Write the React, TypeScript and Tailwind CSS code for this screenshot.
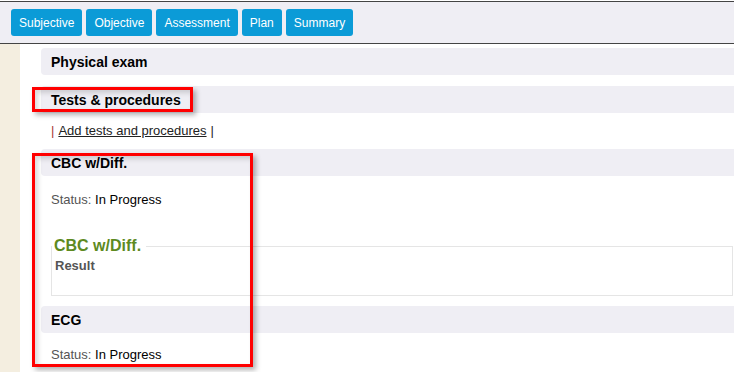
const tabs = ["Subjective", "Objective", "Assessment", "Plan", "Summary"];

function SectionHeader({ title }: { title: string }) {
  return (
    <div className="h-[27px] bg-[#efeef4] rounded-l-[4px] pl-[10px] pt-[2px] flex items-center text-[14px] font-bold text-black">
      {title}
    </div>
  );
}

function StatusLine() {
  return (
    <div className="pl-[10px] text-[13px] leading-[15px]">
      <span className="text-[#555]">Status:</span> <span className="text-black">In Progress</span>
    </div>
  );
}

export default function App() {
  return (
    <div
      className="relative w-[734px] h-[372px] overflow-hidden bg-white"
      style={{ fontFamily: '"Liberation Sans", Arial, sans-serif' }}
    >
      {/* toolbar */}
      <div className="mt-[1px] border-y border-[#444] bg-[#efeef4] h-[43px] pl-[11px] pt-[7px] flex gap-[4px]">
        {tabs.map((t) => (
          <button
            key={t}
            className="h-[27px] px-[8px] rounded-[3px] bg-[#0b9bd7] text-white text-[12px] leading-none"
          >
            {t}
          </button>
        ))}
      </div>

      <div className="flex h-full">
        <div className="w-[20px] bg-[#f4eee0] shrink-0" />
        <div className="flex-1 pl-[21px] pt-[4px]">
          <SectionHeader title="Physical exam" />
          <div className="mt-[11px]">
            <SectionHeader title="Tests & procedures" />
          </div>
          <div className="h-[36px] pl-[10px] flex items-center text-[13px] text-[#222]">
            <span className="text-[#a33]">|</span>
            <span className="ml-[4px] underline">Add tests and procedures</span>
            <span className="ml-[4px]">|</span>
          </div>

          <SectionHeader title="CBC w/Diff." />
          <div className="mt-[16px]">
            <StatusLine />
          </div>

          <fieldset className="mt-[30px] ml-[10px] mr-[1px] border border-[#e5e5e5] h-[59px]">
            <legend className="pl-[2px] pr-[5px] text-[16px] leading-[18px] font-bold text-[#5e8a1f]">
              CBC w/Diff.
            </legend>
            <div className="mt-[3px] ml-[3px] text-[13px] leading-[15px] font-bold text-[#555]">Result</div>
          </fieldset>

          <div className="mt-[10px]">
            <SectionHeader title="ECG" />
          </div>
          <div className="mt-[14px]">
            <StatusLine />
          </div>
        </div>
      </div>

      {/* annotation boxes */}
      <div className="absolute left-[32px] top-[87px] w-[161px] h-[25px] border-[3px] border-[#ff0000] shadow-[3px_3px_5px_rgba(0,0,0,0.3),inset_3px_3px_5px_rgba(0,0,0,0.15)]" />
      <div className="absolute left-[32px] top-[153px] w-[221px] h-[214px] border-[3px] border-[#ff0000] shadow-[3px_3px_5px_rgba(0,0,0,0.3),inset_3px_3px_5px_rgba(0,0,0,0.15)]" />
    </div>
  );
}
